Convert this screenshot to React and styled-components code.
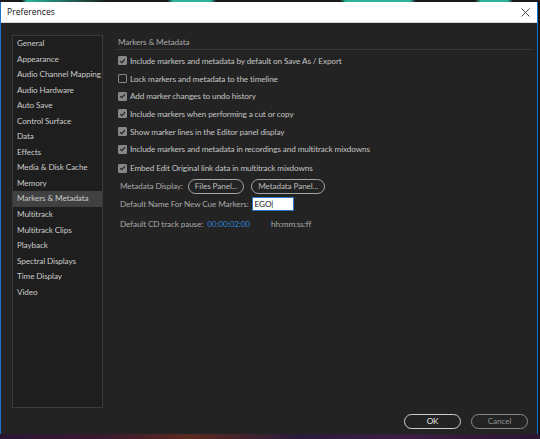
import styled, { createGlobalStyle } from "styled-components"

const GlobalStyle = createGlobalStyle`
  html, body {
    margin: 0;
    padding: 0;
    background: #15151c;
  }
  body {
    font-family: "Lato", "Noto Sans", sans-serif;
  }
  * {
    box-sizing: border-box;
  }
`

const sections = [
  "General",
  "Appearance",
  "Audio Channel Mapping",
  "Audio Hardware",
  "Auto Save",
  "Control Surface",
  "Data",
  "Effects",
  "Media & Disk Cache",
  "Memory",
  "Markers & Metadata",
  "Multitrack",
  "Multitrack Clips",
  "Playback",
  "Spectral Displays",
  "Time Display",
  "Video",
]

const options = [
  { label: "Include markers and metadata by default on Save As / Export", checked: true },
  { label: "Lock markers and metadata to the timeline", checked: false },
  { label: "Add marker changes to undo history", checked: true },
  { label: "Include markers when performing a cut or copy", checked: true },
  { label: "Show marker lines in the Editor panel display", checked: true },
  { label: "Include markers and metadata in recordings and multitrack mixdowns", checked: true },
  { label: "Embed Edit Original link data in multitrack mixdowns", checked: true },
]

export default function App() {
  return (
    <>
      <GlobalStyle />
      <Page>
        <TopStrip />
        <Window>
          <TitleBar>
            <span>Preferences</span>
            <CloseIcon viewBox="0 0 10 10">
              <path d="M0.5 0.5 L9.5 9.5 M9.5 0.5 L0.5 9.5" stroke="#333" strokeWidth="1" />
            </CloseIcon>
          </TitleBar>
          <Body>
            <Main>
              <Sidebar>
                {sections.map(name => (
                  <SideItem key={name} selected={name === "Markers & Metadata"}>
                    {name}
                  </SideItem>
                ))}
              </Sidebar>
              <Content>
                <Header>Markers &amp; Metadata</Header>
                {options.map(opt => (
                  <CheckRow key={opt.label} last={opt.label.startsWith("Embed")}>
                    <Box checked={opt.checked}>
                      {opt.checked && (
                        <svg viewBox="0 0 10 10" width="8" height="8">
                          <path d="M1.6 5.2 L4 7.5 L8.6 2.4" fill="none" stroke="#222" strokeWidth="1.6" />
                        </svg>
                      )}
                    </Box>
                    {opt.label}
                  </CheckRow>
                ))}
                <FieldRow>
                  <Label>Metadata Display:</Label>
                  <PillButton small>Files Panel...</PillButton>
                  <PillButton small>Metadata Panel...</PillButton>
                </FieldRow>
                <FieldRow>
                  <Label>Default Name For New Cue Markers:</Label>
                  <TextInput>EGO|</TextInput>
                </FieldRow>
                <FieldRow tall>
                  <Label>Default CD track pause:</Label>
                  <TimeValue>00:00:02:00</TimeValue>
                  <Label>hh:mm:ss:ff</Label>
                </FieldRow>
              </Content>
            </Main>
            <Footer>
              <PillButton primary>OK</PillButton>
              <PillButton>Cancel</PillButton>
            </Footer>
          </Body>
        </Window>
        <BottomStrip />
      </Page>
    </>
  )
}

const textSize = `
  font-size: 8.2px;
  letter-spacing: -0.12px;
`

const Page = styled.div`
  width: 540px;
  height: 439px;
  display: flex;
  flex-direction: column;
  overflow: hidden;
`
const TopStrip = styled.div`
  height: 2px;
  background: linear-gradient(90deg, #1a1a1a 0%, #1a1a1a 4%, #2bb39a 5%, #1a1a1a 20%, #1a1a1a 31%, #2bb39a 32%, #2bb39a 39%, #1a1a1a 40%, #1a1a1a 63%, #2bb39a 64%, #2bb39a 76%, #1a1a1a 77%, #1a1a1a 88%, #2bb39a 89%, #2bb39a 94%, #1a1a1a 95%);
`
const Window = styled.div`
  flex: 1;
  width: 538px;
  display: flex;
  flex-direction: column;
  border-left: 1px solid #1673c9;
  border-right: 1px solid #1673c9;
  background: #232323;
`
const TitleBar = styled.div`
  height: 21px;
  background: #ffffff;
  display: flex;
  align-items: center;
  justify-content: space-between;
  padding: 0 7px 0 6px;
  border-bottom: 1px solid #d8d8d8;
  font-family: "Open Sans", "Noto Sans", sans-serif;
  font-size: 8.6px;
  color: #111;
`
const CloseIcon = styled.svg`
  width: 9px;
  height: 9px;
`
const Body = styled.div`
  flex: 1;
  display: flex;
  flex-direction: column;
  padding: 12px 4px 0 11px;
`
const Main = styled.div`
  flex: 1;
  display: flex;
`
const Sidebar = styled.div`
  width: 91px;
  background: #1e1e1e;
  border: 1px solid #3a3a3a;
  display: flex;
  flex-direction: column;
`
const SideItem = styled.div`
  height: 15.55px;
  line-height: 15.55px;
  padding-left: 4px;
  ${textSize}
  color: #cacaca;
  white-space: nowrap;
  background: ${p => (p.selected ? "#414141" : "transparent")};
`
const Content = styled.div`
  flex: 1;
  margin-left: 13px;
  display: flex;
  flex-direction: column;
`
const Header = styled.div`
  ${textSize}
  line-height: 10px;
  color: #a8a8a8;
  padding: 2px 0 2px 2px;
  border-bottom: 1px solid #383838;
  margin-bottom: 2px;
`
const CheckRow = styled.div`
  height: 17.7px;
  display: flex;
  align-items: center;
  gap: 3px;
  padding-left: 2px;
  ${textSize}
  color: #c4c4c4;
  white-space: nowrap;
  margin-top: ${p => (p.last ? "1.5px" : "0")};
`
const Box = styled.div`
  width: 9px;
  height: 9px;
  border-radius: 1px;
  display: flex;
  align-items: center;
  justify-content: center;
  background: ${p => (p.checked ? "#878787" : "transparent")};
  border: 1px solid #878787;
`
const FieldRow = styled.div`
  height: ${p => (p.tall ? "22px" : "18px")};
  display: flex;
  align-items: center;
  gap: 5px;
  padding-left: 4px;
  white-space: nowrap;
`
const Label = styled.span`
  ${textSize}
  color: #a8a8a8;
`
const PillButton = styled.div`
  height: 15px;
  width: ${p => (p.small ? "auto" : "57px")};
  padding: 0 6px;
  border-radius: 8px;
  display: flex;
  align-items: center;
  justify-content: center;
  ${textSize}
  color: ${p => (p.primary ? "#e8e8e8" : p.small ? "#bdbdbd" : "#8d8d8d")};
  border: 1px solid ${p => (p.primary ? "#cfcfcf" : p.small ? "#a8a8a8" : "#8a8a8a")};
  & + & {
    margin-left: 2px;
  }
`
const TextInput = styled.div`
  width: 42px;
  height: 14px;
  background: #ffffff;
  border: 1px solid #2a78c8;
  ${textSize}
  color: #111;
  padding-left: 2px;
  line-height: 12px;
  margin-left: -2px;
`
const TimeValue = styled.span`
  ${textSize}
  color: #2f86d6;
  margin-left: -1px;
  margin-right: 16px;
`
const Footer = styled.div`
  height: 26px;
  display: flex;
  align-items: center;
  justify-content: flex-end;
  gap: 8px;
  padding-right: 5px;
`
const BottomStrip = styled.div`
  height: 5px;
  background: linear-gradient(90deg, #2a1633, #3a1a2e 20%, #5a2a1f 35%, #2a1b3a 55%, #3b1d40 75%, #2a1630);
`
